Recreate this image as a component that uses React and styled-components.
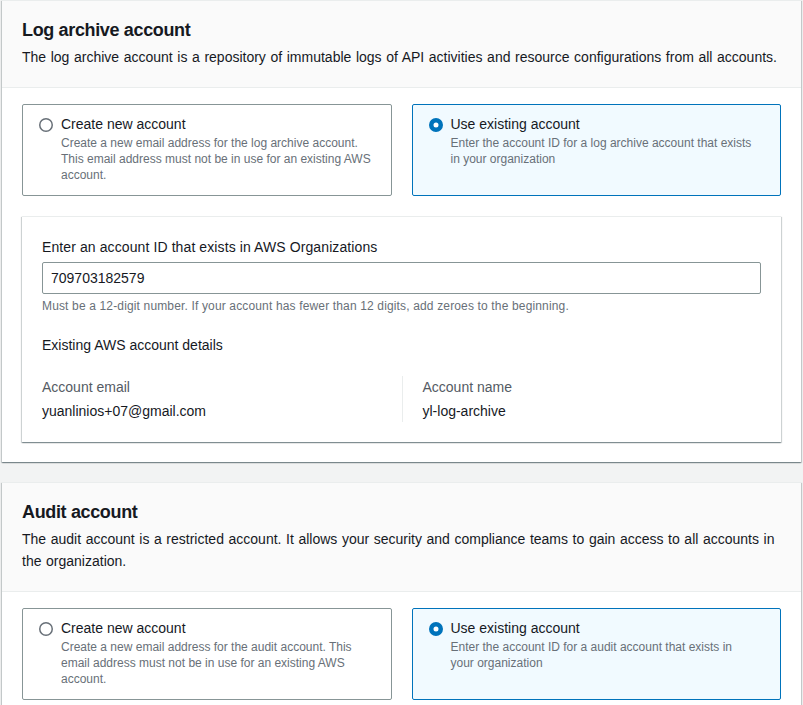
import React from "react";
import styled, { createGlobalStyle } from "styled-components";

const GlobalStyle = createGlobalStyle`
  html, body {
    margin: 0;
    padding: 0;
    background: #f2f3f3;
  }
  body {
    font-family: "Liberation Sans", Arial, sans-serif;
    color: #16191f;
    -webkit-font-smoothing: antialiased;
  }
  * { box-sizing: border-box; }
`;

const Page = styled.div`
  display: flex;
  flex-direction: column;
  gap: 20px;
  padding: 0 2px 20px;
`;

const Card = styled.section`
  background: #ffffff;
  border-top: 1px solid #eaeded;
  box-shadow: 0 1px 1px 0 rgba(0, 28, 36, 0.3),
    1px 1px 1px 0 rgba(0, 28, 36, 0.15),
    -1px 1px 1px 0 rgba(0, 28, 36, 0.15);
`;

const CardHeader = styled.header`
  background: #fafafa;
  padding: 18px 20px 19px;
  border-bottom: 1px solid #eaeded;
`;

const Title = styled.h2`
  margin: 0;
  font-size: 18px;
  line-height: 22px;
  font-weight: 700;
  letter-spacing: -0.35px;
  color: #16191f;
`;

const Description = styled.p`
  margin: 5px 0 0;
  font-size: 14px;
  line-height: 22px;
  word-spacing: 0.7px;
  color: #16191f;
`;

const CardBody = styled.div`
  padding: 16px 20px 20px;
  display: flex;
  flex-direction: column;
  gap: 20px;
`;

const Tiles = styled.div`
  display: grid;
  grid-template-columns: 1fr 1fr;
  gap: 20px;
`;

const Tile = styled.label`
  display: flex;
  gap: 8px;
  align-items: flex-start;
  padding: 9px ${(p) => (p.$selected ? "24px" : "16px")} 12px 16px;
  border: 1px solid ${(p) => (p.$selected ? "#0073bb" : "#879596")};
  background: ${(p) => (p.$selected ? "#f1faff" : "#ffffff")};
  border-radius: 2px;
  cursor: pointer;
`;

const RadioIcon = styled.svg`
  flex: 0 0 auto;
  width: 14px;
  height: 14px;
  margin-top: 4px;
`;

const TileText = styled.div`
  display: flex;
  flex-direction: column;
`;

const TileLabel = styled.span`
  font-size: 14px;
  line-height: 20px;
  color: #16191f;
`;

const TileDescription = styled.span`
  margin-top: 1px;
  font-size: 12px;
  line-height: 16px;
  color: #687078;
`;

const Container = styled.div`
  background: #ffffff;
  border-top: 1px solid #eaeded;
  box-shadow: 0 1px 1px 0 rgba(0, 28, 36, 0.3),
    1px 1px 1px 0 rgba(0, 28, 36, 0.15),
    -1px 1px 1px 0 rgba(0, 28, 36, 0.15);
  padding: 19px 20px 20px;
  display: flex;
  flex-direction: column;
`;

const FieldLabel = styled.label`
  font-size: 14px;
  line-height: 22px;
  letter-spacing: 0.1px;
  color: #16191f;
`;

const TextInput = styled.input`
  margin-top: 4px;
  height: 32px;
  width: 100%;
  padding: 0 8px;
  border: 1px solid #879596;
  border-radius: 2px;
  background: #ffffff;
  font-family: "Liberation Sans", Arial, sans-serif;
  font-size: 14px;
  color: #16191f;
  outline: none;
`;

const HelpText = styled.div`
  margin-top: 4px;
  font-size: 12px;
  line-height: 16px;
  letter-spacing: 0.15px;
  color: #687078;
`;

const SubHeading = styled.div`
  margin-top: 20px;
  font-size: 14px;
  line-height: 22px;
  color: #16191f;
`;

const Columns = styled.div`
  margin-top: 20px;
  display: grid;
  grid-template-columns: 1fr 1fr;
`;

const Column = styled.div`
  display: flex;
  flex-direction: column;
  gap: 2px;
  padding-left: ${(p) => (p.$divided ? "20px" : "0")};
  border-left: ${(p) => (p.$divided ? "1px solid #eaeded" : "none")};
`;

const KeyLabel = styled.div`
  font-size: 14px;
  line-height: 22px;
  color: #545b64;
`;

const Value = styled.div`
  font-size: 14px;
  line-height: 22px;
  color: #16191f;
`;

function Radio({ checked }) {
  return (
    <RadioIcon viewBox="0 0 14 14" aria-hidden="true">
      {checked ? (
        <circle cx="7" cy="7" r="4.75" fill="#ffffff" stroke="#0073bb" strokeWidth="4.5" />
      ) : (
        <circle cx="7" cy="7" r="6.25" fill="#ffffff" stroke="#687078" strokeWidth="1.5" />
      )}
    </RadioIcon>
  );
}

function OptionTile({ selected, label, description }) {
  return (
    <Tile $selected={selected}>
      <Radio checked={selected} />
      <TileText>
        <TileLabel>{label}</TileLabel>
        <TileDescription>{description}</TileDescription>
      </TileText>
    </Tile>
  );
}

function AccountSection({ title, description, newDesc, existingDesc, children }) {
  return (
    <Card>
      <CardHeader>
        <Title>{title}</Title>
        <Description>{description}</Description>
      </CardHeader>
      <CardBody>
        <Tiles>
          <OptionTile selected={false} label="Create new account" description={newDesc} />
          <OptionTile selected label="Use existing account" description={existingDesc} />
        </Tiles>
        {children}
      </CardBody>
    </Card>
  );
}

export default function App() {
  return (
    <>
      <GlobalStyle />
      <Page>
        <AccountSection
          title="Log archive account"
          description="The log archive account is a repository of immutable logs of API activities and resource configurations from all accounts."
          newDesc="Create a new email address for the log archive account. This email address must not be in use for an existing AWS account."
          existingDesc="Enter the account ID for a log archive account that exists in your organization"
        >
          <Container>
            <FieldLabel htmlFor="log-account-id">
              Enter an account ID that exists in AWS Organizations
            </FieldLabel>
            <TextInput id="log-account-id" defaultValue="709703182579" readOnly />
            <HelpText>
              Must be a 12-digit number. If your account has fewer than 12 digits, add zeroes to the beginning.
            </HelpText>
            <SubHeading>Existing AWS account details</SubHeading>
            <Columns>
              <Column>
                <KeyLabel>Account email</KeyLabel>
                <Value>yuanlinios+07@gmail.com</Value>
              </Column>
              <Column $divided>
                <KeyLabel>Account name</KeyLabel>
                <Value>yl-log-archive</Value>
              </Column>
            </Columns>
          </Container>
        </AccountSection>
        <AccountSection
          title="Audit account"
          description="The audit account is a restricted account. It allows your security and compliance teams to gain access to all accounts in the organization."
          newDesc="Create a new email address for the audit account. This email address must not be in use for an existing AWS account."
          existingDesc="Enter the account ID for a audit account that exists in your organization"
        />
      </Page>
    </>
  );
}
